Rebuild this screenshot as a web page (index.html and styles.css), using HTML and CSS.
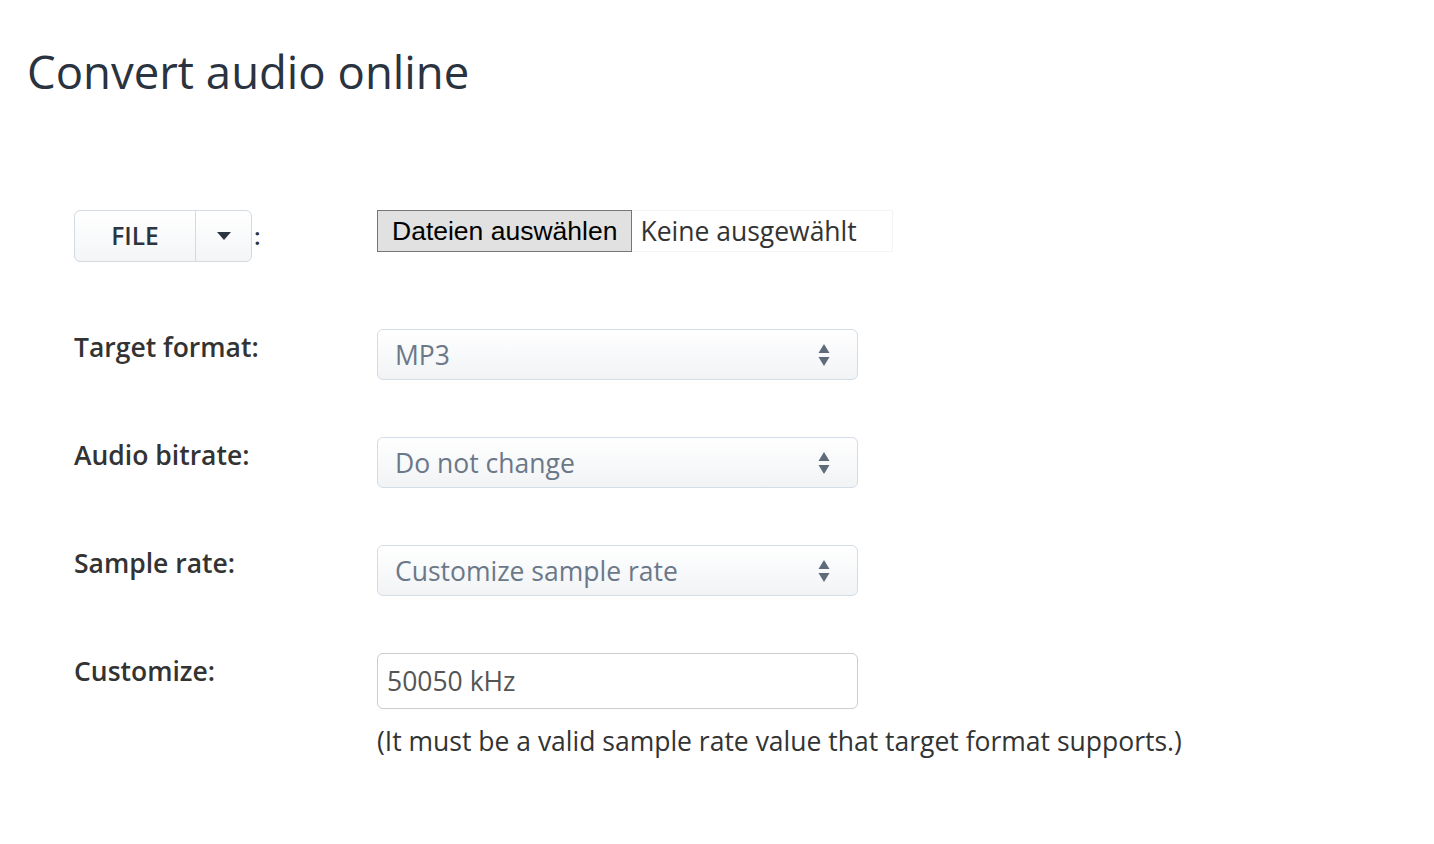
FILE: index.html
```html
<!DOCTYPE html>
<html lang="en">
<head>
<meta charset="utf-8">
<title>Convert audio online</title>
<link rel="stylesheet" href="styles.css">
</head>
<body>
<div class="page">
  <h1 class="title">Convert audio online</h1>
  <form class="form">
    <div class="row row-file">
      <div class="label label-file">
        <div class="split">
          <span class="split-main">FILE</span>
          <span class="split-caret"><svg width="16" height="10" viewBox="0 0 16 10"><path d="M1 1 L15 1 L8 9 Z" fill="#2c3440"/></svg></span>
        </div>
        <span class="colon">:</span>
      </div>
      <div class="control">
        <div class="file-input">
          <span class="file-btn">Dateien auswählen</span>
          <span class="file-name">Keine ausgewählt</span>
        </div>
      </div>
    </div>
    <div class="row">
      <div class="label">Target format:</div>
      <div class="control">
        <div class="select"><span>MP3</span><span class="arrows"><svg width="14" height="26" viewBox="0 0 14 26"><path d="M7 2 L12.5 11 L1.5 11 Z M7 24 L12.5 15 L1.5 15 Z" fill="#5f6b7a"/></svg></span></div>
      </div>
    </div>
    <div class="row">
      <div class="label">Audio bitrate:</div>
      <div class="control">
        <div class="select"><span>Do not change</span><span class="arrows"><svg width="14" height="26" viewBox="0 0 14 26"><path d="M7 2 L12.5 11 L1.5 11 Z M7 24 L12.5 15 L1.5 15 Z" fill="#5f6b7a"/></svg></span></div>
      </div>
    </div>
    <div class="row">
      <div class="label">Sample rate:</div>
      <div class="control">
        <div class="select"><span>Customize sample rate</span><span class="arrows"><svg width="14" height="26" viewBox="0 0 14 26"><path d="M7 2 L12.5 11 L1.5 11 Z M7 24 L12.5 15 L1.5 15 Z" fill="#5f6b7a"/></svg></span></div>
      </div>
    </div>
    <div class="row row-last">
      <div class="label">Customize:</div>
      <div class="control">
        <div class="text-input">50050 kHz</div>
        <p class="hint">(It must be a valid sample rate value that target format supports.)</p>
      </div>
    </div>
  </form>
</div>
</body>
</html>
```
FILE: styles.css
```css
html, body {
  margin: 0;
  padding: 0;
  background: #ffffff;
}
body {
  font-family: "Open Sans", "Noto Sans", sans-serif;
  color: #333333;
}
.page {
  padding: 0 27px;
}
.title {
  margin: 0;
  padding-top: 41px;
  font-size: 45.5px;
  line-height: 60px;
  font-weight: 400;
  color: #2a3340;
}
.form {
  margin-top: 109px;
  padding-left: 47px;
}
.row {
  display: flex;
  align-items: flex-start;
  margin-bottom: 57px;
}
.row-file {
  margin-bottom: 67px;
}
.label {
  width: 303px;
  flex: none;
  font-size: 26.5px;
  font-weight: 600;
  color: #333333;
  line-height: 36px;
}
.label-file {
  display: flex;
  align-items: center;
}
.split {
  display: flex;
  height: 52px;
  border: 1px solid #d3dae2;
  border-radius: 6px;
  background: linear-gradient(#ffffff, #f3f5f7);
  box-sizing: border-box;
}
.split-main {
  width: 120px;
  display: flex;
  align-items: center;
  justify-content: center;
  font-size: 24.5px;
  font-weight: 600;
  color: #2c3440;
  border-right: 1px solid #d3dae2;
}
.split-caret {
  width: 55px;
  display: flex;
  align-items: center;
  justify-content: center;
}
.colon {
  font-size: 24px;
  margin-left: 2px;
  color: #2c3440;
}
.control {
  flex: 1;
}
.file-input {
  display: inline-flex;
  align-items: stretch;
  width: 516px;
  height: 42px;
  border: 1px solid #f4f4f4;
  box-sizing: border-box;
}
.file-btn {
  font-family: "Liberation Sans", Arial, sans-serif;
  font-size: 26.5px;
  color: #000;
  background: #e1e1e1;
  border: 1px solid #767676;
  padding: 0 14px;
  display: flex;
  align-items: center;
  margin: -1px 0 0 -1px;
  height: 42px;
  box-sizing: border-box;
}
.file-name {
  font-size: 26.5px;
  display: flex;
  align-items: center;
  padding-left: 8px;
  color: #333;
}
.select {
  width: 481px;
  height: 51px;
  box-sizing: border-box;
  border: 1px solid #d3dde7;
  border-radius: 6px;
  background: linear-gradient(#ffffff, #f1f3f5);
  display: flex;
  align-items: center;
  justify-content: space-between;
  padding: 0 26px 0 17px;
  font-size: 26.5px;
  color: #6b7888;
}
.arrows {
  display: flex;
  align-items: center;
}
.text-input {
  width: 481px;
  height: 56px;
  box-sizing: border-box;
  border: 1px solid #cccccc;
  border-radius: 6px;
  display: flex;
  align-items: center;
  padding-left: 9px;
  font-size: 26.5px;
  color: #555555;
}
.hint {
  margin: 14px 0 0 0;
  font-size: 26.5px;
  color: #333333;
}
```
